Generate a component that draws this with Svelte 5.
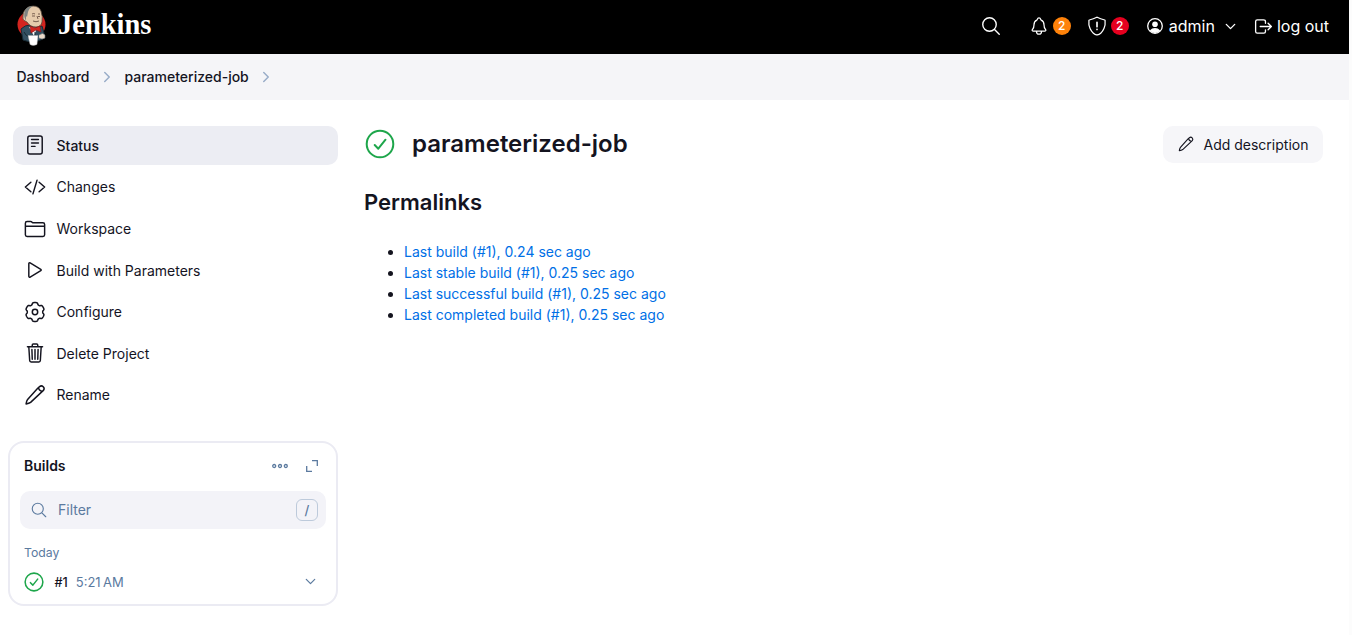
<script>
  // Six-lobed outline of the settings wheel, sampled around its centre.
  const cog =
    'M' +
    Array.from({ length: 120 }, (_, i) => {
      const a = (i * Math.PI) / 60;
      const r = 8.5 + 0.95 * Math.tanh(2.2 * Math.cos(6 * a) + 0.9);
      return `${(12 + r * Math.sin(a)).toFixed(2)} ${(12 - r * Math.cos(a)).toFixed(2)}`;
    }).join('L') +
    'Z';

  const pencil =
    'M14.700 5.300 16.600 3.600a2.700 2.700 0 0 1 3.800 3.800L7.600 19.400q-1.500 1.100-4.500 1.500.4-3 1.500-4.500L14.700 5.300zM15.600 4.600q.1 3.300 3.700 3.700';

  const tasks = [
    { label: 'Status', icon: 'status', active: true },
    { label: 'Changes', icon: 'code' },
    { label: 'Workspace', icon: 'folder' },
    { label: 'Build with Parameters', icon: 'play' },
    { label: 'Configure', icon: 'cog' },
    { label: 'Delete Project', icon: 'trash' },
    { label: 'Rename', icon: 'pencil' }
  ];

  const permalinks = [
    'Last build (#1), 0.24 sec ago',
    'Last stable build (#1), 0.25 sec ago',
    'Last successful build (#1), 0.25 sec ago',
    'Last completed build (#1), 0.25 sec ago'
  ];
</script>

{#snippet ion(name, size)}
  <svg class="ion" width={size} height={size} viewBox="0 0 512 512">
    {#if name === 'status'}
      <rect x="88" y="48" width="336" height="416" rx="48" />
      <path d="M176 128h160M176 208h160M176 288h80" />
    {:else if name === 'code'}
      <path d="M160 368 32 256l128-112M352 368l128-112-128-112M304 96l-96 320" />
    {:else if name === 'folder'}
      <path d="M440 432H72a40 40 0 0 1-40-40V120a40 40 0 0 1 40-40h75.9a40 40 0 0 1 22.2 6.7l27.8 18.6a40 40 0 0 0 22.2 6.7H440a40 40 0 0 1 40 40v240a40 40 0 0 1-40 40zM32 192h448" />
    {:else if name === 'play'}
      <path d="M112 111v290c0 17.4 17 28.5 31 20.2l247.9-148.4c12.1-7.3 12.1-26.4 0-33.6L143 90.8c-14-8.3-31 2.8-31 20.2z" />
    {:else if name === 'trash'}
      <path d="m112 112 20 320c1 18.500 14.400 32 32 32h184c17.700 0 30.900-13.500 32-32l20-320M80 112h352M192 112V72a24 24 0 0 1 24-24h80a24 24 0 0 1 24 24v40M256 176v224M184 176l8 224M328 176l-8 224" />
    {:else if name === 'search'}
      <path d="M221 64a157 157 0 1 0 157 157A157 157 0 0 0 221 64zM338 338l110 110" />
    {:else if name === 'bell'}
      <path d="M427.700 351.400C404 322.700 384 307 384 222.600c0-77.400-39.500-104.900-72-118.300-4.300-1.800-8.400-5.900-9.700-10.300C296.600 74.600 280.600 48 256 48s-40.600 26.600-46.200 46c-1.400 4.400-5.500 8.500-9.800 10.300-32.600 13.400-72 40.900-72 118.300C128 307 108 322.700 84.300 351.400 74.500 363.300 83.200 384 100.600 384h311c17.300 0 25.900-20.700 16.100-32.600zM320 384v16a64 64 0 0 1-128 0v-16" />
    {:else if name === 'shield'}
      <path d="M463 112.400c-.6-4.900-4.400-9-9.200-10.100C363 80.700 336 72.700 261 33.200a11 11 0 0 0-10 0c-75 39.500-102 47.500-192.800 69.100a11.500 11.500 0 0 0-9.200 10.100c-8.400 70 1 145 29 210 20 46 48 86 85 118 33 29 68 45 88 39.500a11 11 0 0 0 10 0c28 2 63-15 91-40 37-32 63-72 82-118 28-65 37.400-140 29-209.500z" />
      <path d="M256 160v118M256 340v8" stroke-width="42" />
    {:else if name === 'logout'}
      <path d="M304 336v40a40 40 0 0 1-40 40H104a40 40 0 0 1-40-40V136a40 40 0 0 1 40-40h152c22 0 48 18 48 40v40M368 336l80-80-80-80M176 256h256" />
    {:else if name === 'down'}
      <path d="m112 184 144 144 144-144" />
    {:else if name === 'right'}
      <path d="m184 112 144 144-144 144" />
    {/if}
  </svg>
{/snippet}

{#snippet fine(path, size, hub)}
  <svg class="fine" width={size} height={size} viewBox="0 0 24 24">
    <path d={path} />
    {#if hub}<circle cx="12" cy="12" r="2.700" />{/if}
  </svg>
{/snippet}

{#snippet success(size, width)}
  <svg class="success" width={size} height={size} viewBox="0 0 30 30" stroke-width={width}>
    <circle cx="15" cy="15" r="13.300" />
    <path d="m9.700 16 3.600 3.700 7.200-9" />
  </svg>
{/snippet}

<div class="page">
  <header>
    <a class="brand" href="#top">
      <svg class="butler" width="32" height="42" viewBox="0 0 32 42">
        <ellipse cx="15.500" cy="20.500" rx="14" ry="13.500" fill="#d3241f" />
        <path d="M5 25q4-4 9-4l5 3 7-2 2 7-1 6q-10 5-20 1z" fill="#335061" stroke="#182a34" />
        <path d="m13 23 5 9 3-8z" fill="#fff" />
        <path d="M9 17q-3-1-2-5 0-4 2-6 3-4 8-4 6 0 8 5 2 6 1 11-1 5-6 5-6 0-9-5z" fill="#e6cbac" stroke="#57473b" stroke-width=".8" />
        <path d="M9 6q3-4 8-4-4 2-5 6l-1 5-1-1v5q-3-5-1-11z" fill="#7d8381" />
        <path d="M16 10q2-1 3 0M22 10h2M16 12h3M22 12.500h2M17 17q3 1.500 6 0M21 12l1 3" fill="none" stroke="#6b5144" stroke-width=".9" />
        <path d="m14 22 5 2 5-2 1 6-5-2-5 3z" fill="#d3241f" stroke="#81171a" stroke-width=".6" />
        <path d="M8 28q2 4 5 5M19 28v3" stroke="#182a34" fill="none" />
        <path d="M12 31.500h10l-1 9q-4 2-7 0z" fill="#fff" stroke="#aaa" stroke-width=".4" />
        <path d="M23 31q4-3 6 0v3q-3 2-6 0" fill="#ead9c8" stroke="#68747a" stroke-width=".6" />
      </svg>
      <span>Jenkins</span>
    </a>
    <nav class="tools">
      <a class="search" href="#search">{@render ion('search', 22)}</a>
      <a class="alert" href="#notices">{@render ion('bell', 20)}<b class="badge">2</b></a>
      <a class="alert security" href="#security">{@render ion('shield', 20)}<b class="badge red">2</b></a>
      <a class="user" href="#user">
        <svg width="16" height="16" viewBox="0 0 16 16">
          <circle cx="8" cy="8" r="7.300" fill="none" stroke="#fff" stroke-width="1.300" />
          <circle cx="8" cy="6.300" r="2.800" fill="#fff" />
          <path d="M2.800 12.400q2.200-2.300 5.200-2.300t5.200 2.300Q11 15 8 15t-5.200-2.600z" fill="#fff" />
        </svg>
        <span>admin</span>
      </a>
      <span class="caret">{@render ion('down', 15)}</span>
      <a class="logout" href="#logout">{@render ion('logout', 21)}<span>log out</span></a>
    </nav>
  </header>

  <nav class="crumbs">
    <a href="#dashboard">Dashboard</a>
    {@render ion('right', 16)}
    <a href="#job">parameterized-job</a>
    {@render ion('right', 16)}
  </nav>

  <div class="body">
    <aside>
      <nav class="tasks">
        {#each tasks as task}
          <a class:active={task.active} href="#task">
            <i>
              {#if task.icon === 'cog'}
                {@render fine(cog, 24, true)}
              {:else if task.icon === 'pencil'}
                {@render fine(pencil, 24, false)}
              {:else}
                {@render ion(task.icon, 22)}
              {/if}
            </i>
            <span>{task.label}</span>
          </a>
        {/each}
      </nav>

      <section class="builds">
        <div class="head">
          <h2>Builds</h2>
          <svg width="18" height="10" viewBox="0 0 18 10">
            <circle cx="3.200" cy="5" r="1.500" /><circle cx="9" cy="5" r="1.500" /><circle cx="14.800" cy="5" r="1.500" />
          </svg>
          <svg width="14" height="14" viewBox="0 0 14 14"><path d="M7 1.700h5.300V7M1.700 7v5.300H7" /></svg>
        </div>
        <div class="filter">
          {@render ion('search', 18)}
          <span>Filter</span>
          <kbd>/</kbd>
        </div>
        <div class="day">Today</div>
        <div class="build">
          {@render success(20, 2.300)}
          <b>#1</b>
          <time>5:21&#8239;AM</time>
          {@render ion('down', 15)}
        </div>
      </section>
    </aside>

    <main>
      <div class="title">
        {@render success(30, 2)}
        <h1>parameterized-job</h1>
        <button>{@render fine(pencil, 18, false)}<span>Add description</span></button>
      </div>
      <h2>Permalinks</h2>
      <ul>
        {#each permalinks as link}
          <li><a href="#build">{link}</a></li>
        {/each}
      </ul>
    </main>
  </div>
</div>

<style>
  :global(body) {
    background: #fcfcfc;
    overflow: hidden;
  }
  .page {
    width: 1349px;
    height: 635px;
    background: #fff;
    color: #14141f;
    font: 14px/21px Inter, sans-serif;
  }
  a {
    color: inherit;
    text-decoration: none;
  }
  svg {
    flex: none;
    display: block;
  }
  h1,
  h2 {
    margin: 0;
    font-weight: 600;
  }
  .ion,
  .fine {
    fill: none;
    stroke: currentColor;
    stroke-width: 32;
    stroke-linecap: round;
    stroke-linejoin: round;
  }
  .fine {
    stroke-width: 1.5;
  }
  .success {
    fill: none;
    stroke: #1ea64b;
    stroke-linecap: round;
    stroke-linejoin: round;
  }
  header {
    box-sizing: border-box;
    height: 54px;
    padding: 0 20px 0 16px;
    display: flex;
    align-items: flex-start;
    justify-content: space-between;
    background: #000;
    color: #fff;
  }
  .brand {
    display: flex;
    align-items: flex-start;
    gap: 10px;
    padding-top: 4px;
    font: bold 28.5px/34px 'Liberation Serif', serif;
  }
  .brand span {
    margin-top: 4px;
  }
  .tools {
    display: flex;
    align-items: center;
    height: 52px;
    font-size: 16px;
  }
  .tools a {
    display: flex;
    align-items: center;
  }
  .alert {
    margin-left: 27px;
    gap: 4px;
  }
  .security {
    margin-left: 16px;
  }
  .badge {
    width: 18px;
    height: 18px;
    border-radius: 50%;
    background: #fe820a;
    font-size: 12px;
    line-height: 18px;
    font-weight: 500;
    text-align: center;
  }
  .red {
    background: #e6001f;
  }
  .user {
    margin-left: 18px;
    gap: 6px;
  }
  .caret {
    margin: 0 15.500px 0 8px;
  }
  .caret .ion {
    stroke-width: 46;
  }
  .logout {
    gap: 2.500px;
  }
  .crumbs {
    box-sizing: border-box;
    height: 46px;
    padding: 0 0 2px 16.500px;
    display: flex;
    align-items: center;
    gap: 9.500px;
    background: #f5f5f8;
    font-weight: 500;
  }
  .crumbs .ion {
    margin-top: 1px;
    stroke: #98acc8;
    stroke-width: 46;
  }
  .body {
    display: flex;
    padding: 26px 26px 0 8px;
  }
  aside {
    width: 330px;
  }
  .tasks {
    display: flex;
    flex-direction: column;
    gap: 2.500px;
    padding-left: 5px;
  }
  .tasks a {
    box-sizing: border-box;
    height: 39px;
    padding-left: 10px;
    display: flex;
    align-items: center;
    gap: 9.500px;
    border-radius: 10px;
  }
  .tasks i {
    display: grid;
    place-items: center;
    width: 24px;
    height: 24px;
  }
  .tasks .ion {
    stroke-width: 34;
  }
  .tasks .active {
    background: #ecedf3;
    font-weight: 500;
  }
  .tasks .active i {
    margin-top: -1px;
  }
  .tasks a:nth-child(2) {
    padding-bottom: 1px;
  }
  .builds {
    box-sizing: border-box;
    height: 165px;
    margin-top: 26.900px;
    padding: 0 10px;
    border: 2px solid #ebebf3;
    border-radius: 16px;
  }
  .head {
    display: flex;
    align-items: center;
    height: 46px;
    padding: 0 7px 0 4px;
    gap: 16px;
  }
  .head h2 {
    flex: 1;
    font-size: 14px;
    line-height: 21px;
    font-weight: 600;
  }
  .head svg {
    fill: none;
    stroke: #5b7a9f;
    stroke-width: 1.3;
  }
  .filter {
    display: flex;
    align-items: center;
    height: 38px;
    margin-top: 2px;
    padding: 0 8px 0 9.500px;
    border-radius: 10px;
    background: #f3f3f8;
    color: #5b7a9f;
    gap: 10.500px;
  }
  .filter span {
    flex: 1;
  }
  kbd {
    box-sizing: border-box;
    width: 22px;
    height: 22px;
    border: 1px solid #bdcadb;
    border-radius: 6px;
    font: 500 13px/20px Inter, sans-serif;
    text-align: center;
  }
  .day {
    margin: 14px 4px 0;
    color: #5b7a9f;
    font-size: 12.25px;
    line-height: 20px;
  }
  .build {
    display: flex;
    align-items: center;
    height: 20px;
    padding: 0 8px 0 4px;
    margin-top: 9px;
    font-size: 13px;
    color: #5b7a9f;
  }
  .build b {
    margin: 2px 8px 0 10.500px;
    color: #14141f;
    font-size: 12.6px;
    font-weight: 500;
  }
  .build .ion {
    stroke-width: 42;
  }
  time {
    flex: 1;
    margin-top: 2px;
  }
  main {
    flex: 1;
    padding-left: 26px;
  }
  .title {
    display: flex;
    align-items: center;
    height: 37px;
  }
  .title .success {
    margin: -2px 17px 0 1px;
  }
  h1 {
    flex: 1;
    margin-top: -2px;
    font-size: 24px;
    line-height: 32px;
  }
  button {
    display: flex;
    align-items: center;
    box-sizing: border-box;
    width: 160px;
    height: 37px;
    padding: 0 0 0 14px;
    gap: 8.500px;
    border: 0;
    border-radius: 10px;
    background: #f6f6f9;
    color: #14141f;
    font: 14px/21px Inter, sans-serif;
  }
  button .fine {
    margin-top: -1px;
  }
  main > h2 {
    margin-top: 23px;
    font-size: 22px;
    line-height: 32px;
  }
  ul {
    margin: 23px 0 0;
    padding-left: 40px;
  }
  li a {
    color: #006fe6;
  }
</style>
